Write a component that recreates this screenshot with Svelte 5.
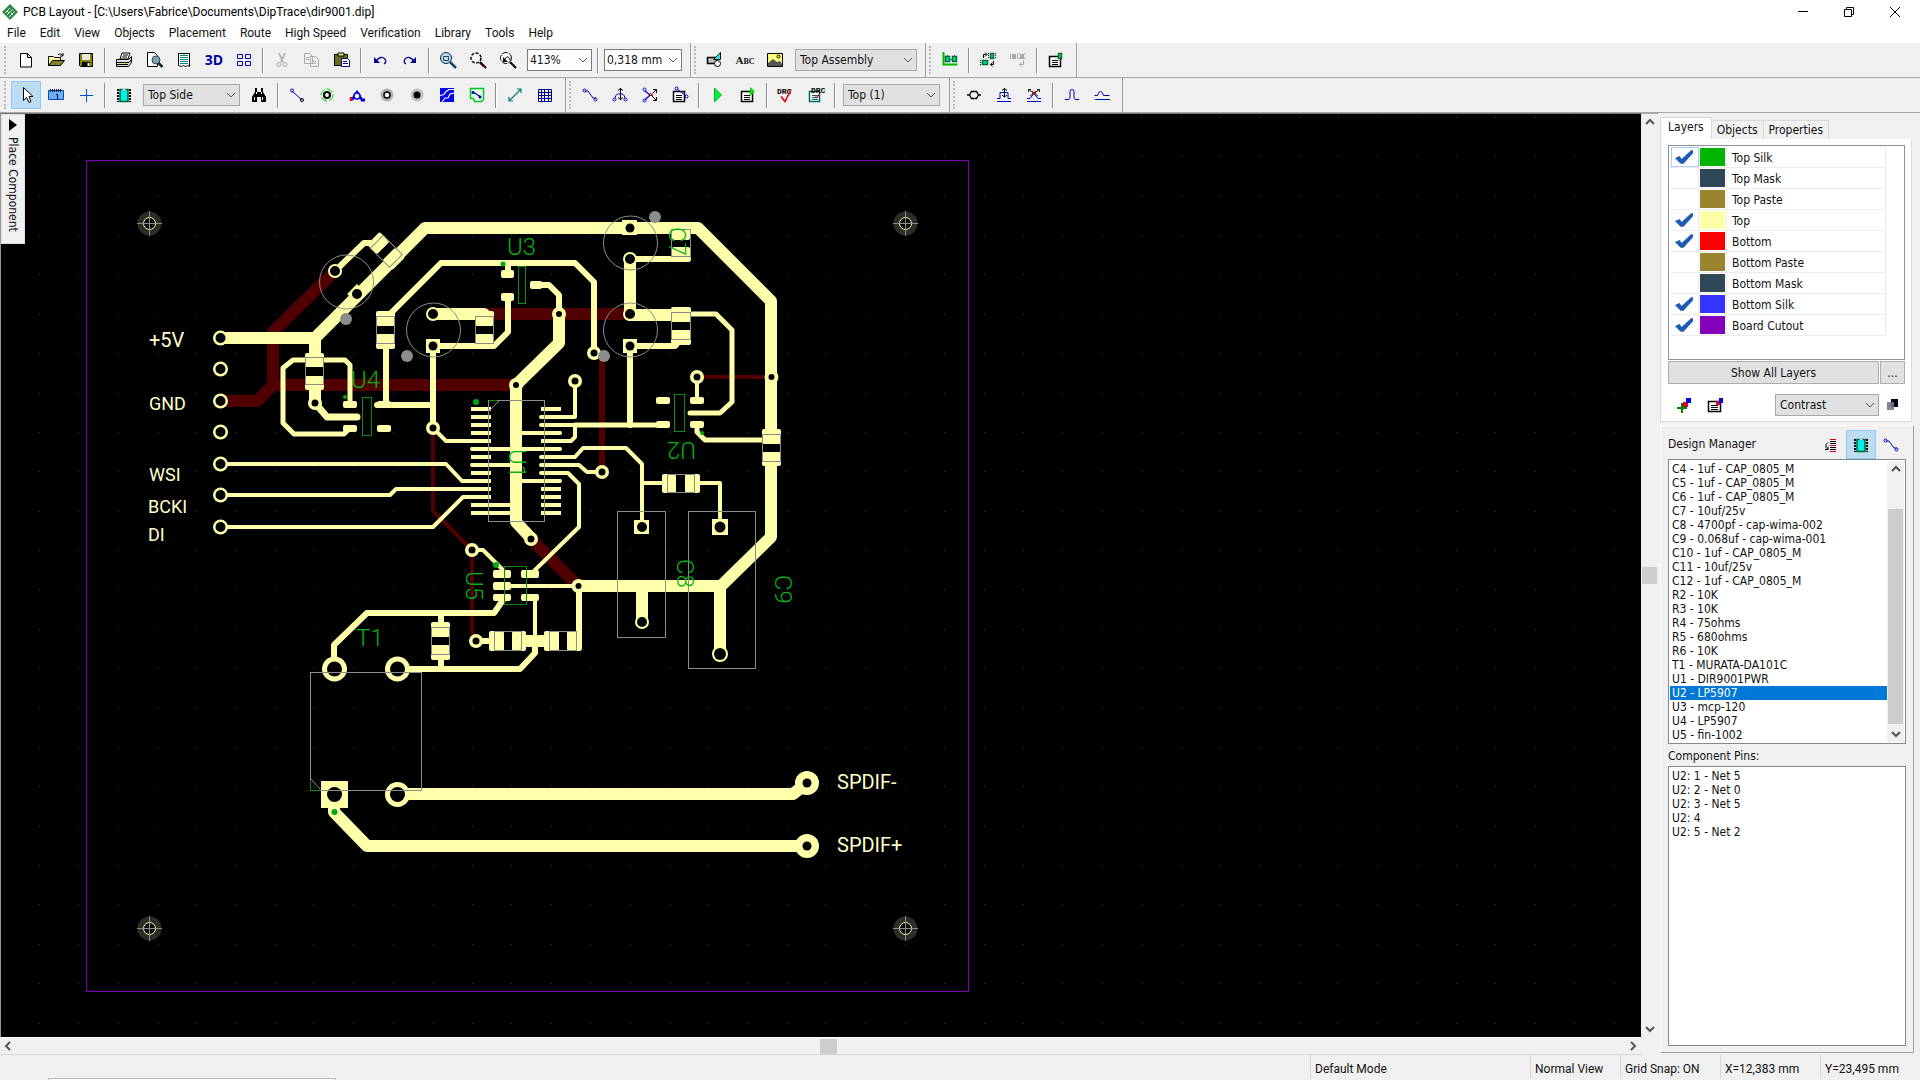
<script>
  const icons = {
    new: '<path d="M6.500 5.500h7l4 4v9.500h-11z M13.500 5.500v4h4" fill="#fff" stroke="#000"/>',
    open: '<path d="M4.500 17.500v-9h5l1 1h6v3" fill="#ffff9c" stroke="#000"/><path d="M4.500 17.500l4-5h12l-4 5z" fill="#84822c" stroke="#000"/><path d="M14 6.500q3-2 5 1m0-2.500v3h-3" fill="none" stroke="#000"/>',
    save: '<path d="M5.500 5.500h13v13h-12l-1-1z" fill="#848200" stroke="#000"/><path d="M8 6h8v6H8z" fill="#e8e8e8"/><path d="M8 14h8v5H8z" fill="#000"/><path d="M13.500 15h2v3h-2z" fill="#fff"/>',
    print: '<path d="M8 11l2-6h8l-2 6z" fill="#fff" stroke="#000"/><path d="M11 7h5m-6 2h5" stroke="#000"/><path d="M4.500 11.500h12l3-3v6l-3 4h-12z" fill="#ddd" stroke="#000"/><path d="M5 14.500h12l2.500-3M5 16.500h11" stroke="#000" fill="none"/><path d="M12 15h3v1h-3z" fill="#dd0"/>',
    preview: '<path d="M5.500 4.500h7l3 3v11h-10z" fill="#fff" stroke="#000"/><circle cx="14" cy="12" r="4" fill="#7fa3a8" stroke="#345"/><path d="M16.500 15l4 4" stroke="#123" stroke-width="2.500"/>',
    report: '<path d="M6.500 5.500h11v13l-2-1-2 1-2-1-2 1-3-1z" fill="#fff" stroke="#000"/><path d="M8 7.500h8M8 9.500h8M8 11.500h8M8 13.500h8M8 15.500h8" stroke="#008080"/>',
    grid4: '<path d="M5.500 6.500h5v4h-5zM13.500 6.500h5v4h-5zM5.500 13.500h5v4h-5zM13.500 13.500h5v4h-5z" fill="none" stroke="#00009c"/>',
    cut: '<path d="M9 5l4 9M15 5l-4 9" stroke="#aaa" stroke-width="1.500"/><circle cx="9" cy="16.500" r="2" fill="none" stroke="#aaa"/><circle cx="15" cy="16.500" r="2" fill="none" stroke="#aaa"/>',
    copy: '<path d="M4.500 5.500h5l3 3v7h-8zM10.500 8.500h5l3 3v7h-8z" fill="#eee" stroke="#aaa"/><path d="M6 9.500h3m-3 2h3m3 2h4m-4 2h4" stroke="#aaa"/>',
    paste: '<path d="M4.500 6.500h13v11h-13z" fill="#6b6b20" stroke="#000"/><path d="M8 5h6v3H8z" fill="#ee6" stroke="#000"/><path d="M11.500 10.500h6l2 2v6h-8z" fill="#fff" stroke="#000084"/><path d="M13 13.500h4m-4 2h5" stroke="#000084"/>',
    undo: '<path d="M8 13q5-6 9-2 2 3-1 5" fill="none" stroke="#00008c" stroke-width="1.300"/><path d="M6 9v6h6z" fill="#00008c"/>',
    redo: '<path d="M16 13q-5-6-9-2-2 3 1 5" fill="none" stroke="#00008c" stroke-width="1.300"/><path d="M18 9v6h-6z" fill="#00008c"/>',
    zoomfit: '<circle cx="10" cy="10" r="5.500" fill="#b9e0ee" stroke="#123"/><path d="M7.500 8.500h5v4h-5z" fill="none" stroke="#246"/><path d="M14 14l6 6" stroke="#147" stroke-width="2.500"/>',
    zoomsel: '<circle cx="10" cy="10" r="5" fill="#f8f8f8" stroke="#000" stroke-width="1.500" stroke-dasharray="3 1.500"/><path d="M14 14l6 6" stroke="#000" stroke-width="2"/><path d="M13 15l4 4" stroke="#e33"/>',
    zoomprev: '<circle cx="10" cy="10" r="5.500" fill="#fff" stroke="#000" stroke-dasharray="6 1"/><path d="M7 9v5h5z" fill="#000"/><path d="M9 11q3-5 5 1" fill="none" stroke="#000"/><path d="M14 14l6 6" stroke="#000" stroke-width="2"/>',
    shapes: '<path d="M4.500 9.500h9v6h-9z" fill="#c0c0c0" stroke="#000" stroke-width="1.500"/><circle cx="14.500" cy="15.500" r="3" fill="#fff" stroke="#000"/><path d="M10.500 11.500l7-7v7z" fill="#2ce0f0" stroke="#000"/>',
    picture: '<path d="M4.500 5.500h15v13h-15z" fill="#ffff84" stroke="#000"/><path d="M5 18v-3l5-4 4 3 3-1 2 3v2z" fill="#555"/><circle cx="15.500" cy="8.500" r="1.500" fill="#ff0" stroke="#000"/>',
    align: '<path d="M5.500 4v12.500h14" fill="none" stroke="#00b400" stroke-width="2"/><path d="M7.500 8.500h4v5h-4zM14.500 8.500h4v5h-4z" fill="#00e0a0" stroke="#046a34" stroke-width="1.500"/><path d="M9 7.500h1m6 0h1m-5 4h2" stroke="#046a34"/>',
    place: '<path d="M14.500 5.500h3v5h-3zM6.500 12.500h5v4h-5z" fill="#00e0a0" stroke="#046a34" stroke-width="1.500"/><path d="M7.500 10V6.500h3M9 4.500l2 2-2 2M17.500 13v3.500h-3m2-2l-2 2 2 2" fill="none" stroke="#000"/><path d="M12.500 5v6m7-6v6M4.500 12v5" stroke="#000" stroke-dasharray="1 1"/>',
    placeoff: '<path d="M6 6h4v5H6zM14 6h4v5h-4z" fill="#a8a8a8"/><path d="M4.500 6v5m7-5v5m1-6l2 2m-2 4l2-2m5-4l-2 2m2 4l-2-2" stroke="#aaa"/><path d="M17.500 12v4.500h-4m2-2l-2 2 2 2" fill="none" stroke="#aaa"/>',
    props: '<path d="M5.500 8.500h11v10h-11z" fill="#fff" stroke="#000" stroke-width="1.500"/><path d="M8 12.500h6m-6 2h6m-6 2h6" stroke="#000"/><path d="M14.500 5.500h3v5h-3z" fill="#00e0a0" stroke="#046a34" stroke-width="1.500"/>',
    cursor: '<path d="M9.500 4.500v13l3-3 2.500 5 2-1-2-5h4z" fill="#fff" stroke="#000"/>',
    ruler: '<path d="M4.500 7.500h15v9h-15z" fill="#6ab0f2" stroke="#0050b8"/><path d="M6.500 6v3m2-3v3m2-3v3m2-3v3m2-3v3m2-3v3" stroke="#013"/><path d="M12 11.500h1.500V16" fill="none" stroke="#003"/>',
    cross: '<path d="M12.500 6v13M6 12.500h13" stroke="#0050d0"/>',
    chip: '<path d="M8 6.500h8v12H8z" fill="#00f0f0" stroke="#006428" stroke-width="1.500"/><path d="M10.500 5.500h3v2h-3z" fill="#bcdcf4"/><path d="M6 6v13M18 6v13" stroke="#000" stroke-width="2" stroke-dasharray="2 1"/>',
    find: '<path d="M8 5h2v4h4V5h2v4l3 5v5h-5v-5h-4v5H5v-5l3-5z" fill="#000"/><path d="M7.500 14v3m8-3v3M9.500 9v2m5-2v2" stroke="#fff"/>',
    route: '<path d="M7.500 8.500l9 8" stroke="#0000b4"/><circle cx="7" cy="7.500" r="1.500" fill="none" stroke="#0000b4"/><circle cx="17" cy="17" r="1.500" fill="none" stroke="#000"/>',
    via: '<circle cx="12" cy="12" r="6" fill="#eaffea" stroke="#00d020" stroke-dasharray="7 2"/><circle cx="12" cy="12" r="3" fill="#fff" stroke="#000" stroke-width="2.200"/>',
    jumper: '<path d="M7 17l5-8 5 8" fill="none" stroke="#0000e8" stroke-width="2.500"/><circle cx="12" cy="13" r="3" fill="#fff" stroke="#0000e8" stroke-width="1.500"/><path d="M6 14v4" stroke="#e00" stroke-width="2.500"/><path d="M16 17h4" stroke="#0000e8" stroke-width="3"/>',
    pad: '<circle cx="12" cy="12" r="6.500" fill="#b0b0b0"/><circle cx="12" cy="12" r="3" fill="#fff" stroke="#000" stroke-width="1.500"/>',
    hole: '<circle cx="12" cy="12" r="6.500" fill="#c0c0c0"/><circle cx="12" cy="12" r="3.500" fill="#000"/>',
    pour: '<path d="M5 5h14v14H5z" fill="#0000e8"/><path d="M5 12.500l4-1 2-3 3-2h5M7 19l3-4h3l2-4 4-1" fill="none" stroke="#fff" stroke-width="1.200"/>',
    freepour: '<path d="M5.500 5.500h13v11l-2 2h-7l-1-3h-3z" fill="#eaffea" stroke="#00c828" stroke-width="1.500"/><path d="M8 9l8 5" stroke="#00a" stroke-width="1.200"/><circle cx="8" cy="9.500" r="1.500" fill="#00a"/><circle cx="15" cy="14" r="1.500" fill="#00a"/>',
    dim: '<path d="M6.500 17.500l11-11M6 14v4h4M14 6h4v4" fill="none" stroke="#008278" stroke-width="1.200"/>',
    table: '<path d="M5.500 6.500h13v12h-13zM5.500 9.500h13m-13 3h13m-13 3h13M8.500 6v13m3-13v13m4-13v13" fill="none" stroke="#00008c"/>',
    manual: '<path d="M7 8h3l5 7h3" fill="none" stroke="#0000b4"/><circle cx="6.500" cy="7.500" r="1.500" fill="none" stroke="#0000b4"/><circle cx="17.500" cy="16.500" r="1.500" fill="none" stroke="#0000b4"/>',
    unroute: '<path d="M12.500 5v12M10 7.500l2.500-2 2.500 2M10 14.500l2.500 2 2.500-2" fill="none" stroke="#000"/><path d="M7 15q1-5 5-4 4-1 5 4" fill="none" stroke="#0000c8"/><circle cx="6.500" cy="16.500" r="1.500" fill="none" stroke="#0000c8"/><circle cx="17.500" cy="16.500" r="1.500" fill="none" stroke="#0000c8"/>',
    reroute: '<path d="M13 12l5-5M13 12l5 5M18.500 10V6.500H15M18.500 14v3.500H15" fill="none" stroke="#000"/><path d="M7 8l5 4-5 5" fill="none" stroke="#0000c8" stroke-width="1.300"/><circle cx="6.500" cy="6.500" r="1.500" fill="none" stroke="#0000c8"/><circle cx="6.500" cy="17.500" r="1.500" fill="none" stroke="#0000c8"/><path d="M12 10l3 3m0-3l-3 3" stroke="#d00"/>',
    netlist: '<path d="M5.500 8.500h11v10h-11z" fill="#fff" stroke="#000" stroke-width="1.500"/><path d="M8 12.500h6m-6 2h6m-6 2h6" stroke="#000"/><path d="M9 6l8 6" stroke="#0000c8"/><circle cx="8.500" cy="5.500" r="1.500" fill="none" stroke="#0000c8"/><circle cx="18.500" cy="13.500" r="1.500" fill="none" stroke="#0000c8"/>',
    play: '<path d="M8.500 5v14l7-7z" fill="#00f038" stroke="#00b828"/>',
    autosetup: '<path d="M5.500 8.500h11v10h-11z" fill="#fff" stroke="#000" stroke-width="1.500"/><path d="M8 12.500h6m-6 2h6m-6 2h6" stroke="#000"/><path d="M14 4v9l5-4.500z" fill="#00e000"/>',
    drc: '<text x="3" y="11" font-size="8" font-weight="700" font-family="Liberation Mono" fill="#000">DRC</text><path d="M7 13.500l4 5 6-12" fill="none" stroke="#e00000" stroke-width="1.500"/>',
    drcset: '<path d="M5.500 8.500h10v10h-10z" fill="#fff" stroke="#066" stroke-width="1.500"/><path d="M8 12.500h6m-6 2h6m-6 2h6" stroke="#066"/><text x="7" y="10" font-size="8" font-weight="700" font-family="Liberation Mono" fill="#000">DRC</text><path d="M11 12l2 3 3-5" fill="none" stroke="#e00"/>',
    pair: '<path d="M5 12h2.500l2-3.500h5l2 3.500H19M7.500 12l2 3.500h5l2-3.500" fill="none" stroke="#000" stroke-width="1.300"/>',
    meander: '<path d="M5 15.500h3v-6h8v6h3M5 18.500h14" fill="none" stroke="#0000c8"/><path d="M12.500 5v9M10 7.500l2.500-2 2.500 2M10 12l2.500 2 2.500-2" fill="none" stroke="#000"/>',
    nomeander: '<path d="M5 15.500h3l4-5 4 5h3M5 18.500h14" fill="none" stroke="#0000c8"/><path d="M6.500 9V6.500H9M6.500 6.500L16 13M17.500 9V6.500H15m2.500 0L8 13" fill="none" stroke="#222"/><path d="M10 8l4 3m0-3l-4 3" stroke="#c00"/>',
    pulse: '<path d="M5 16.500h4q1 0 1-4v-4q0-2 2-2t2 2v4q0 4 1 4h4" fill="none" stroke="#0000b4"/>',
    phase: '<path d="M4.500 12.500h3q1-4 3-4t3 4h6M5 16.500h15" fill="none" stroke="#0000b4"/>',
    addlayer: '<path d="M5 15h10M10 10v10" stroke="#008000" stroke-width="2"/><path d="M11 9h5v5h-5z" fill="#e00030"/><path d="M14 5h5v5h-5z" fill="#0000d8"/>',
    layerset: '<path d="M4.500 8.500h12v10h-12z" fill="#fff" stroke="#000" stroke-width="1.500"/><path d="M7 12.500h7m-7 2h7m-7 2h7" stroke="#000"/><path d="M12 8h4v4h-4z" fill="#e00030"/><path d="M15 5h4v5h-4z" fill="#0000d8"/>',
    contrast: '<path d="M11 6h7v8h-7z" fill="#001"/><path d="M7 9h7v8H7z" fill="#778" opacity="0.900"/>',
    sort: '<path d="M11 6.500h6M11 12.500h6M11 18.500h6" stroke="#c00"/><path d="M11 8.500h6m-6 2h6m-6 4h6m-6 2h6" stroke="#000"/><path d="M9 9.500l-2 2v3l2 2m0-3v3H6" fill="none" stroke="#000"/>'
  };

  // '|' separates button clusters inside one bar
  const row1a = ['new', 'open', 'save', '|', 'print', 'preview', 'report', '3D', 'grid4', '|', 'cut', 'copy', 'paste', '|', 'undo', 'redo', '|', 'zoomfit', 'zoomsel', 'zoomprev', ['413%', 's'], '|', ['0,318 mm', 'm']];
  const row1b = ['shapes', 'Abc', 'picture', ['Top Assembly', 'l']];
  const row1c = ['align', '|', 'place', 'placeoff', '|', 'props'];
  const row2a = ['cursor', 'ruler', 'cross', '|', 'chip', ['Top Side', 'x'], 'find', '|', 'route', 'via', 'jumper', 'pad', 'hole', 'pour', 'freepour', '|', 'dim', 'table'];
  const row2b = ['manual', 'unroute', 'reroute', 'netlist', '|', 'play', 'autosetup', '|', 'drc', 'drcset', '|', ['Top (1)', 'x']];
  const row2c = ['pair', 'meander', 'nomeander', '|', 'pulse', 'phase'];
  const rows = [[row1a, row1b, row1c], [row2a, row2b, row2c]];

  const menus = ['File', 'Edit', 'View', 'Objects', 'Placement', 'Route', 'High Speed', 'Verification', 'Library', 'Tools', 'Help'];

  const layers = [
    ['Top Silk', '#00b400', true], ['Top Mask', '#2f4858', false], ['Top Paste', '#9a8430', false],
    ['Top', '#ffffaa', true], ['Bottom', '#ff0000', true], ['Bottom Paste', '#9a8430', false],
    ['Bottom Mask', '#2f4858', false], ['Bottom Silk', '#3434ff', true], ['Board Cutout', '#8200b8', true]
  ];
  const parts = ['C4 - 1uf - CAP_0805_M', 'C5 - 1uf - CAP_0805_M', 'C6 - 1uf - CAP_0805_M', 'C7 - 10uf/25v', 'C8 - 4700pf - cap-wima-002', 'C9 - 0.068uf - cap-wima-001', 'C10 - 1uf - CAP_0805_M', 'C11 - 10uf/25v', 'C12 - 1uf - CAP_0805_M', 'R2 - 10K', 'R3 - 10K', 'R4 - 75ohms', 'R5 - 680ohms', 'R6 - 10K', 'T1 - MURATA-DA101C', 'U1 - DIR9001PWR', 'U2 - LP5907', 'U3 - mcp-120', 'U4 - LP5907', 'U5 - fin-1002'];
  const pins = ['U2: 1 - Net 5', 'U2: 2 - Net 0', 'U2: 3 - Net 5', 'U2: 4', 'U2: 5 - Net 2'];
  let selected = $state(16);

  let dots = '';
  for (let i = 0; i < 41; i++) for (let j = 0; j < 24; j++) dots += `M${Math.round(38.8 + i * 39.37)} ${Math.round(117 + j * 39.37)}h1`;

  // [width, path]
  const bottom = [
    [12, 'M335 271L273 332V385L257 401H220'], [12, 'M273 385H516'], [12, 'M470 314H630'],
    [6, 'M602 355V472'], [4, 'M433 428V511L472 550V632L476 641'], [12, 'M531 539L578 586'], [4, 'M697 377H771']
  ];
  const traces = [
    [12, 'M220 338H315L425 228H698L771 301V537L721 586H578'], [12, 'M720 586V654'], [12, 'M642 586V622'],
    [12, 'M315 338V360'], [12, 'M315 384V403'], [7, 'M315 403L327 417H357'],
    [5, 'M306 360H293L283 368V423L294 434H344L350 428'], [5, 'M323 360H345L350 365V404'],
    [6, 'M377 405H433'], [6, 'M335 271L364 243H376'], [6, 'M391 313L441 263H575L594 282V353'], [6, 'M386 345V405'],
    [12, 'M433 314H484'], [6, 'M433 346H494L508 332V297'], [6, 'M433 346V428'], [4, 'M433 428L446 441H472'],
    [6, 'M508 263V272'], [6, 'M540 285H549L559 295V314'], [12, 'M559 314V343L516 385V522L531 538'],
    [12, 'M630 259V315H680'], [6, 'M630 259H688'], [6, 'M630 346H675L680 340'], [6, 'M630 346V425'],
    [5, 'M680 314H716L732 330V402L720 413H690'], [5, 'M575 425H662'], [4, 'M697 377V400'], [5, 'M697 425V432L705 440H765'],
    [4, 'M541 417H575V381'], [4, 'M541 425H575V437L571 441H545'], [4, 'M472 449H560'], [4, 'M516 433H560'], [4, 'M472 465H516'],
    [4, 'M541 457H575L583 448H626L642 464V526'], [4, 'M642 483H665'], [4, 'M698 483H720V526'],
    [4, 'M541 465H579L587 472H602'], [4, 'M541 473H568L579 484V527L534 571'], [4, 'M516 481H560'], [4, 'M480 505H516M480 513H516'],
    [4, 'M220 464H446L462 481H472'], [4, 'M220 495H390L396 489H472'], [4, 'M220 527H433L463 497H472'],
    [4, 'M472 550H483L503 570'], [4, 'M511 586H578'], [6, 'M579 586V648'], [4, 'M535 600V641'],
    [6, 'M503 600L494 613H367L334 645V668'], [6, 'M535 641V653L520 669H397'], [6, 'M441 613V669'],
    [6, 'M476 641H492'], [12, 'M524 641H546'],
    [12, 'M397 794H793L807 783'], [12, 'M334 794V812L367 846H807']
  ];
  // x, y, width, height
  const pads = [
    [305, 353, 19, 14], [305, 376, 19, 14], [376, 311, 19, 15], [376, 334, 19, 15], [475, 311, 19, 15], [475, 334, 19, 15],
    [672, 225, 18, 15], [672, 247, 18, 15], [671, 307, 20, 15], [671, 330, 20, 15], [762, 429, 19, 15], [762, 452, 19, 14],
    [343, 401, 14, 7], [343, 425, 14, 7], [377, 401, 14, 7], [377, 425, 14, 7],
    [501, 270, 13, 8], [501, 293, 13, 8], [530, 281, 12, 8],
    [656, 397, 14, 7], [656, 421, 14, 7], [690, 397, 14, 7], [690, 421, 14, 7],
    [662, 474, 14, 19], [685, 474, 15, 19],
    [493, 570, 18, 8], [493, 582, 18, 8], [493, 594, 18, 7], [521, 570, 18, 8], [521, 594, 18, 7],
    [489, 631, 15, 20], [512, 631, 14, 20], [544, 631, 15, 20], [567, 631, 14, 20],
    [431, 622, 19, 15], [431, 645, 19, 15]
  ];
  const squares = [[426, 339, 14, 14], [622, 220, 15, 15], [623, 339, 14, 14], [634, 520, 15, 14], [712, 519, 16, 16], [321, 781, 27, 27]];
  const gaps = [[305, 367, 19, 9], [376, 326, 19, 8], [475, 326, 19, 8], [671, 240, 20, 7], [671, 322, 20, 8], [762, 444, 19, 8], [676, 474, 9, 19], [504, 631, 8, 20], [559, 631, 8, 20], [431, 637, 19, 8]];
  // cx, cy, copper radius, drill radius
  const rings = [
    ...[338, 369, 401, 432, 464, 495, 527].map((y) => [220.5, y, 7.5, 5]),
    [335, 271, 7, 5], [357, 294, 0, 5], [433, 314, 7, 5], [433, 346, 0, 4.5], [433, 428, 7, 3.5], [315, 403, 7, 3.5], [594, 353, 7, 3.5],
    [559, 314, 7, 3], [516, 385, 7, 3], [630, 228, 0, 4.5], [630, 259, 7, 5], [630, 314, 7, 5], [630, 346, 0, 4.5],
    [697, 377, 7, 3.5], [771.5, 377, 7, 3], [575, 381, 7, 3.5], [602, 472, 7, 3.5], [531, 539, 7, 3.5], [472, 550, 7, 3.5], [578.5, 586, 7, 3],
    [476, 641, 7, 3.5], [642, 527, 0, 5], [642, 622, 7, 5], [720, 527, 0, 5.5], [720, 654, 8, 6],
    [334.5, 669, 12.5, 7.5], [397.5, 669, 12.5, 7.5], [334.5, 794.5, 0, 7.5], [397.5, 794.5, 12.5, 7.5], [807, 783, 12, 4.5], [807, 846, 12, 4.5]
  ];
  const outlines = [[305, 357, 18, 27], [376, 316, 18, 27], [475, 316, 18, 27], [671, 229, 19, 27], [671, 312, 19, 27], [762, 434, 18, 27], [667, 474, 27, 18], [494, 631, 27, 19], [549, 631, 27, 19], [431, 627, 18, 27], [488, 400, 56, 121], [617, 511, 48, 126], [688, 511, 67, 157], [310, 672, 111, 118]];
  const bodies = [[362, 397, 9, 38], [518, 266, 7, 37], [674, 394, 10, 37], [504, 566, 22, 38]];
  const cans = [[346, 282], [433, 330], [630, 243], [630, 330]];
  const marks = [[346, 319], [407, 356], [655, 217], [604, 356]];
  const greens = [[345, 397, 2], [503, 264, 2.5], [702, 433, 2], [476, 402, 3], [496, 565, 3], [334.5, 812, 3]];
  const fiducials = [[149, 223], [905, 223], [149, 928], [905, 928]];
  const pinRows = Array.from({ length: 14 }, (_, i) => 409 + i * 8);
  // text, x, y, size class, rotation
  const netNames = [['+5V', 149, 347, 'big'], ['GND', 149, 410, ''], ['WSI', 149, 481, ''], ['BCKI', 148, 513, ''], ['DI', 148, 541, ''], ['SPDIF-', 837, 789, 'big'], ['SPDIF+', 837, 852, 'big']];
  const refs = [['U4', 351, 388, 0], ['U3', 507, 255, 0], ['T1', 356, 646, 0], ['C7', 669, 227, 90], ['U1', 509, 449, 90], ['U2', 696, 442, 180], ['U5', 466, 571, 90], ['C8', 677, 559, 90], ['C9', 775, 575, 90]];
</script>

{#snippet icon(name)}
  <svg class="ic" viewBox="0 0 24 24" aria-hidden="true">{@html icons[name]}</svg>
{/snippet}

{#snippet chev(d)}
  <svg class="chev" viewBox="0 0 10 10" aria-hidden="true"><path {d} /></svg>
{/snippet}

{#snippet combo(label, size)}
  <span class="combo {size}">
    <select aria-label={label}><option>{label}</option></select>
    {@render chev('M1 3l4 4 4-4')}
  </span>
{/snippet}

<div class="app">
  <header class="title">
    <svg class="logo" viewBox="0 0 16 16" aria-hidden="true">
      <path d="M8 0l8 8-8 8-8-8z" fill="#2f8a4a" /><path d="M3 9l5-5M5 11l6-6M7 13l6-6M5 7l2 2m2 0l2 2" stroke="#cfe8d2" />
    </svg>
    <h1>PCB Layout - [C:\Users\Fabrice\Documents\DipTrace\dir9001.dip]</h1>
    <div class="win">
      <button aria-label="Minimize"><svg viewBox="0 0 12 12"><path d="M1 5.500h10" /></svg></button>
      <button aria-label="Restore"><svg viewBox="0 0 12 12"><path d="M1.500 3.500h7v7h-7zM3.500 3V1.500h7v7H9" /></svg></button>
      <button aria-label="Close"><svg viewBox="0 0 12 12"><path d="M1 1l10 10M11 1L1 11" /></svg></button>
    </div>
  </header>
  <nav class="menu">
    {#each menus as m}<button>{m}</button>{/each}
  </nav>

  {#each rows as bars}
    <div class="bars">
      {#each bars as bar}
        <div class="bar" role="toolbar">
          <span class="grip"></span>
          {#each bar as t}
            {#if t === '|'}<span class="sep"></span>
            {:else if Array.isArray(t)}{@render combo(t[0], t[1])}
            {:else if t === '3D'}<button class="tool three">3D</button>
            {:else if t === 'Abc'}<button class="tool abc">A<small>BC</small></button>
            {:else}<button class="tool" class:on={t === 'cursor'} aria-label={t}>{@render icon(t)}</button>{/if}
          {/each}
        </div>
      {/each}
    </div>
  {/each}

  <main>
    <section class="work">
      <div class="view">
        <div class="canvas">
          <svg class="board" width="1640" height="923" viewBox="1 114 1640 923" role="img" aria-label="Board">
            <path d={dots} class="dots" />
            <rect x="86.500" y="160.500" width="882" height="831" class="cutout" />
            {#each fiducials as [x, y]}
              <circle cx={x + 0.5} cy={y + 0.5} r="12" fill="#2c2c28" />
              <circle cx={x + 0.5} cy={y + 0.5} r="6" fill="#000" stroke="#ffffaa" />
              <path d="M{x - 12} {y + 0.5}h25M{x + 0.5} {y - 12}v25" class="thin" />
            {/each}
            {#each bottom as [w, d]}<path {d} stroke-width={w} class="red" />{/each}
            {#each traces as [w, d]}<path {d} stroke-width={w} class="cu" />{/each}
            {#each pinRows as y}<path d="M471 {y}h20M541 {y}h20" stroke-width="4" class="pin" />{/each}
            {#each gaps as [x, y, width, height]}<rect {x} {y} {width} {height} fill="#000" />{/each}
            {#each pads as [x, y, width, height]}<rect {x} {y} {width} {height} rx="2" class="pad" />{/each}
            {#each squares as [x, y, width, height]}<rect {x} {y} {width} {height} class="pad" />{/each}
            <rect x="350" y="287" width="14" height="14" class="pad" transform="rotate(45 357 294)" />
            <g transform="translate(386 251) rotate(45)">
              <rect x="-4" y="-9" width="8" height="18" fill="#000" />
              <rect x="-18" y="-9" width="14" height="18" rx="2" class="pad" />
              <rect x="4" y="-9" width="14" height="18" rx="2" class="pad" />
              <rect x="-13" y="-9" width="27" height="18" class="thin" />
            </g>
            {#each rings as [x, y, r, h]}
              {#if r}<circle cx={x} cy={y} {r} class="pad" />{/if}
              <circle cx={x} cy={y} r={h} fill="#000" />
            {/each}
            {#each outlines as [x, y, width, height]}<rect x={x + 0.5} y={y + 0.5} {width} {height} class="thin" />{/each}
            <path d="M488 412l11-11M311 779l9 10" class="thin" />
            {#each cans as [x, y]}<circle cx={x + 0.5} cy={y} r="27" class="thin" />{/each}
            {#each marks as [x, y]}<circle cx={x} cy={y} r="6" fill="#8c8c8c" />{/each}
            {#each bodies as [x, y, width, height]}<rect x={x + 0.5} y={y + 0.5} {width} {height} class="body" />{/each}
            <path d="M310.500 780v10.500h9M489 400.500h8" class="body" />
            {#each greens as [x, y, r]}<circle cx={x} cy={y} {r} fill="#00a814" />{/each}
            {#each netNames as [s, x, y, c]}<text {x} {y} class="net {c}">{s}</text>{/each}
            {#each refs as [s, x, y, a]}<text transform="translate({x} {y}) rotate({a})" class="ref">{s}</text>{/each}
          </svg>
        </div>
        <button class="place"><svg viewBox="0 0 8 12" aria-hidden="true"><path d="M0 0l8 6-8 6z" /></svg><span>Place Component</span></button>
      </div>
      <div class="sb v">
        {@render chev('M1 7l4-4 4 4')}<i></i>{@render chev('M1 3l4 4 4-4')}
      </div>
      <div class="sb h">
        {@render chev('M7 1l-4 4 4 4')}<i></i>{@render chev('M3 1l4 4-4 4')}
      </div>
    </section>

    <aside>
      <div class="tabs" role="tablist">
        <button role="tab" class="cur">Layers</button><button role="tab">Objects</button><button role="tab">Properties</button>
      </div>
      <section class="panel">
        <div class="layers">
          {#each layers as [name, color, on], i}
            <label>
              <span class="tick" class:focus={i === 0}>
                <input type="checkbox" checked={on} />
                <svg viewBox="0 0 20 16" aria-hidden="true"><path d="M1 9l5-2 2 3L18 1h2v3L10 15H7z" /></svg>
              </span>
              <span class="sw"><b style="background:{color}"></b></span>
              <span class="nm">{name}</span>
            </label>
          {/each}
        </div>
        <div class="showall"><button>Show All Layers</button><button class="more">...</button></div>
        <div class="opts">
          <button class="tool" aria-label="Add layer">{@render icon('addlayer')}</button>
          <button class="tool" aria-label="Layer setup">{@render icon('layerset')}</button>
          {@render combo('Contrast', 'c')}
          <button class="tool end" aria-label="Contrast mode">{@render icon('contrast')}</button>
        </div>
      </section>
      <section class="dm">
        <div class="dmhead">
          <h2>Design Manager</h2>
          <button class="tool" aria-label="Sort">{@render icon('sort')}</button>
          <button class="tool on" aria-label="Components">{@render icon('chip')}</button>
          <button class="tool" aria-label="Nets">{@render icon('manual')}</button>
        </div>
        <div class="list">
          <ul>
            {#each parts as p, i}<li><button class:sel={i === selected} onclick={() => (selected = i)}>{p}</button></li>{/each}
          </ul>
          <div class="sb v inner">{@render chev('M1 7l4-4 4 4')}<i></i>{@render chev('M1 3l4 4 4-4')}</div>
        </div>
        <h3>Component Pins:</h3>
        <ul class="pins">
          {#each pins as p}<li>{p}</li>{/each}
        </ul>
      </section>
    </aside>
  </main>

  <footer>
    <div class="stub"></div>
    <span class="mode">Default Mode</span><span class="w2">Normal View</span><span class="w3">Grid Snap: ON</span><span class="w3">X=12,383 mm</span><span class="w3">Y=23,495 mm</span>
  </footer>
</div>

<style>
  :global(body) { margin: 0; background: #f0f0f0; }
  * { box-sizing: border-box; }
  .app { height: 100vh; min-height: 900px; display: flex; flex-direction: column; background: #f0f0f0; color: #111; font: 12px/14px "DejaVu Sans Condensed", "Noto Sans", sans-serif; }
  button { font: inherit; color: inherit; border: 0; background: none; padding: 0; }
  h1, h2, h3, ul { margin: 0; padding: 0; font: inherit; list-style: none; }
  .title, .menu, footer { font: 12px/16px Roboto, "Open Sans", sans-serif; }
  .title { height: 23px; background: #fff; display: flex; align-items: center; gap: 5px; padding: 0 2px; color: #000; }
  .logo { width: 16px; height: 16px; }
  .win { margin-left: auto; display: flex; height: 20px; }
  .win button { width: 46px; display: grid; place-items: center; }
  .win svg { width: 12px; height: 12px; fill: none; stroke: #000; }
  .menu { height: 20px; background: #fff; display: flex; gap: 14px; padding-left: 7px; }

  .bars { display: flex; height: 35px; border-bottom: 1px solid #a8a8a8; }
  .bar { display: flex; align-items: center; border-right: 1px solid #a0a0a0; padding-right: 5px; }
  .grip { width: 3px; height: 28px; margin: 0 4px; border-left: 2px dotted #bbb; }
  .bar:not(:first-child) .grip { margin: 0 3px; }
  .sep { width: 2px; height: 25px; margin: 0 3px; border-left: 1px solid #8c8c8c; border-right: 1px solid #fff; }
  .tool { width: 30px; height: 28px; display: grid; place-items: center; }
  .tool.on { background: #bcdcf4; border: 1px solid #90c8f6; }
  .ic { width: 24px; height: 24px; }
  .three { color: #00009c; font: 700 14px/16px "Open Sans", sans-serif; }
  .abc { display: block; font: 700 11px/28px "Liberation Serif", serif; text-align: center; }
  .abc small { font-size: 8px; }
  .combo { position: relative; display: block; }
  .combo select { appearance: none; width: 100%; height: 22px; font: inherit; color: #111; border: 1px solid #a8a8a8; border-radius: 0; background: #e1e1e1; padding: 0 4px; }
  .combo.s { width: 65px; margin: 0 2px 0 4px; }
  .combo.m { width: 78px; margin: 0 3px 0 2px; }
  .combo.l { width: 122px; margin: 0 3px 0 5px; }
  .combo.x { width: 97px; margin: 0 4px; }
  .combo.c { width: 104px; margin: 0 0 0 auto; }
  .combo.s select, .combo.m select { background: #fff; border-color: #7a7a7a; padding: 0 2px; }
  .combo .chev { position: absolute; right: 4px; top: 6px; pointer-events: none; }
  .chev { width: 10px; height: 10px; fill: none; stroke: #555; stroke-width: 1; }

  main { flex: 1; min-height: 0; display: flex; }
  .work { flex: 1; min-width: 0; display: grid; grid-template: minmax(0, 1fr) 18px / minmax(0, 1fr) 17px; }
  .view { position: relative; border-left: 1px solid #999; border-top: 1px solid #777; background: #000; overflow: hidden; }
  .canvas { width: 100%; height: 100%; overflow: hidden; }
  .board { display: block; }
  .place { position: absolute; left: 0; top: 0; width: 24px; height: 130px; background: #f0f0f0; border: 1px solid #ddd; display: flex; flex-direction: column; align-items: center; gap: 6px; padding-top: 4px; }
  .place svg { width: 8px; height: 12px; }
  .place span { writing-mode: vertical-rl; line-height: 16px; white-space: nowrap; }
  .dots { stroke: #3c3c3c; shape-rendering: crispEdges; }
  .cutout { fill: none; stroke: #8200b8; }
  .thin { fill: none; stroke: #8c8c8c; }
  .body { fill: none; stroke: #0a8c14; }
  .red { fill: none; stroke: #500000; stroke-linejoin: round; }
  .cu { fill: none; stroke: #ffffaa; stroke-linejoin: round; stroke-linecap: round; }
  .pin { stroke: #ffffaa; }
  .pad { fill: #ffffaa; }
  .net, .ref { font-family: Roboto, "Liberation Sans", sans-serif; }
  .net { fill: #ffffc8; font-size: 18px; }
  .net.big { font-size: 20px; }
  .ref { fill: #00b414; font-size: 24px; font-weight: 300; }

  .sb { display: flex; align-items: center; justify-content: space-between; background: #f0f0f0; }
  .sb .chev { stroke-width: 2; }
  .sb i { background: #cdcdcd; }
  .sb.v { flex-direction: column; padding: 3px 0; border-top: 1px solid #aaa; }
  .sb.v i { width: 15px; height: 17px; }
  .sb.h { padding: 0 3px; border-bottom: 1px solid #d8d8d8; border-top: 1px solid #fff; }
  .sb.h i { width: 17px; height: 15px; margin-left: 16px; }

  aside { width: 262px; display: flex; flex-direction: column; padding: 4px 6px 2px 2px; }
  .tabs { display: flex; align-items: flex-end; height: 22px; flex: none; }
  .tabs button { height: 19px; padding: 0 5px; border: 1px solid #d9d9d9; border-left: 0; border-bottom: 0; white-space: nowrap; }
  .tabs .cur { height: 22px; background: #fff; padding: 0 7px 4px; border-left: 1px solid #d9d9d9; }
  .panel { background: #fff; border: 1px solid #dcdcdc; border-top: 0; margin-right: 2px; padding: 6px 6px 0 7px; height: 283px; flex: none; display: flex; flex-direction: column; }
  .layers { height: 215px; flex: none; border: 1px solid #8c9099; padding: 1px 18px 0 2px; }
  .layers label { display: flex; height: 21px; border-bottom: 1px solid #ececec; border-right: 1px solid #ececec; }
  .tick { width: 28px; border: 1px solid transparent; display: grid; place-items: center; position: relative; border-right-color: #ececec; padding-right: 3px; }
  .tick.focus { border-color: #a8d0f8; }
  .tick input { position: absolute; inset: 0; margin: 0; opacity: 0; }
  .tick svg { width: 19px; height: 16px; fill: #1c5cb4; visibility: hidden; }
  .tick input:checked + svg { visibility: visible; }
  .sw { width: 28px; padding: 1px 1px 0; border-right: 1px solid #ececec; }
  .sw b { display: block; width: 25px; height: 18px; }
  .nm { padding-left: 5px; line-height: 22px; }
  .showall { display: flex; gap: 1px; margin-top: 1px; }
  .showall button { flex: 1; height: 23px; background: #e1e1e1; border: 1px solid #adadad; }
  .showall .more { flex: none; width: 25px; }
  .opts { display: flex; align-items: center; height: 42px; flex: none; }
  .opts .tool { width: 32px; }
  .opts .end { width: 26px; }
  .dm { flex: 1; min-height: 0; margin-top: 3px; border: 1px solid #a0a0a0; border-left-color: #fff; border-top-color: #fff; padding: 4px 7px 6px 7px; display: flex; flex-direction: column; }
  .dmhead { display: flex; align-items: center; height: 29px; flex: none; }
  .dmhead h2 { flex: 1; padding-bottom: 2px; }
  .dmhead .tool { height: 29px; }
  .list { border: 1px solid #828790; background: #fff; height: 285px; flex: none; display: flex; padding: 1px; overflow: hidden; }
  .list ul { flex: 1; padding-top: 1px; }
  .list li button { display: block; width: 100%; text-align: left; height: 14px; padding-left: 2px; white-space: nowrap; }
  .list .sel { background: #0078d7; color: #fff; }
  .sb.inner { width: 17px; border: 0; }
  .sb.inner i { height: 215px; margin: auto 0 5px; }
  .dm h3 { line-height: 24px; height: 22px; flex: none; }
  .pins { flex: 1; min-height: 0; border: 1px solid #828790; background: #fff; padding: 2px 3px; }

  footer { height: 25px; flex: none; display: flex; align-items: stretch; }
  footer span { border-left: 1px solid #d8d8d8; padding: 6px 0 0 4px; height: 23px; white-space: nowrap; }
  .stub { width: 288px; height: 2px; margin: 0 auto 0 48px; align-self: flex-end; background: #fff; border: 1px solid #bbb; border-bottom: 0; }
  .mode { width: 220px; } .w2 { width: 90px; } .w3 { width: 100px; }
</style>
